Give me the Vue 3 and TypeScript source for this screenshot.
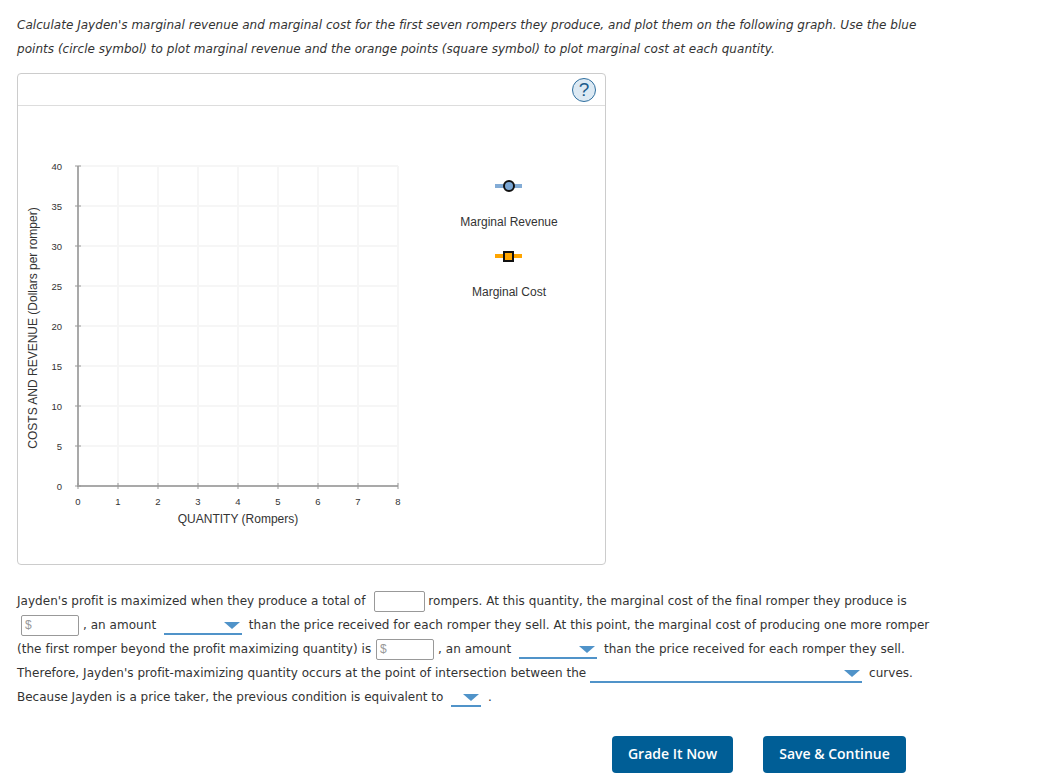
<script setup lang="ts">
const gridX = [118, 158, 198, 238, 278, 318, 358, 398]
const gridY = [166, 206, 246, 286, 326, 366, 406, 446]
const xTicks = [0, 1, 2, 3, 4, 5, 6, 7, 8]
const yTicks = [0, 5, 10, 15, 20, 25, 30, 35, 40]
</script>

<template>
  <div class="page">
    <div class="prompt">
      <div>Calculate Jayden's marginal revenue and marginal cost for the first seven rompers they produce, and plot them on the following graph. Use the blue</div>
      <div>points (circle symbol) to plot marginal revenue and the orange points (square symbol) to plot marginal cost at each quantity.</div>
    </div>

    <div class="card">
      <div class="cardHead">
        <span class="help">?</span>
      </div>
      <svg class="chart" width="587" height="458" viewBox="18 106 587 458">
        <line v-for="x in gridX" :key="'gx' + x" :x1="x" y1="166" :x2="x" y2="486" class="grid" />
        <line v-for="y in gridY" :key="'gy' + y" x1="78" :y1="y" x2="398" :y2="y" class="grid" />

        <line x1="78" y1="166" x2="78" y2="487" class="axis" />
        <line x1="77" y1="486" x2="398" y2="486" class="axis" />
        <g v-for="t in yTicks" :key="'yt' + t">
          <line x1="75" :y1="486 - t * 8" x2="81" :y2="486 - t * 8" class="tick" />
          <text x="62" :y="490 - t * 8" text-anchor="end" class="tickLabel">{{ t }}</text>
        </g>
        <g v-for="t in xTicks" :key="'xt' + t">
          <line :x1="78 + t * 40" y1="483" :x2="78 + t * 40" y2="489" class="tick" />
          <text :x="78 + t * 40" y="505" text-anchor="middle" class="tickLabel">{{ t }}</text>
        </g>

        <text x="238" y="523" text-anchor="middle" class="axisTitle">QUANTITY (Rompers)</text>
        <text transform="translate(37 328) rotate(-90)" text-anchor="middle" class="axisTitle">COSTS AND REVENUE (Dollars per romper)</text>

        <line x1="495" y1="186" x2="522" y2="186" stroke="#83acd6" stroke-width="4" />
        <circle cx="509" cy="186" r="5" fill="#7ba7d4" stroke="#111" stroke-width="2" />
        <text x="509" y="226" text-anchor="middle" class="axisTitle">Marginal Revenue</text>

        <line x1="495" y1="256" x2="522" y2="256" stroke="#ffa500" stroke-width="4" />
        <rect x="504" y="252" width="9" height="9" fill="#ffa500" stroke="#111" stroke-width="2" />
        <text x="509" y="296" text-anchor="middle" class="axisTitle">Marginal Cost</text>
      </svg>
    </div>

    <div class="answer">
      <div>Jayden's profit is maximized when they produce a total of <span class="field qty"></span>rompers. At this quantity, the marginal cost of the final romper they produce is</div>
      <div><span class="field money first">$</span>, an amount <span class="drop small"></span> than the price received for each romper they sell. At this point, the marginal cost of producing one more romper</div>
      <div>(the first romper beyond the profit maximizing quantity) is <span class="field money second">$</span>, an amount <span class="drop small"></span> than the price received for each romper they sell.</div>
      <div>Therefore, Jayden's profit-maximizing quantity occurs at the point of intersection between the <span class="drop wide"></span> curves.</div>
      <div class="tight">Because Jayden is a price taker, the previous condition is equivalent to <span class="drop tiny"></span> .</div>
    </div>

    <div class="actions">
      <button class="btn grade">Grade It Now</button>
      <button class="btn save">Save &amp; Continue</button>
    </div>
  </div>
</template>

<style>
body {
  margin: 0;
  background: #fff;
}
</style>

<style scoped>
.page {
  width: 1053px;
  height: 781px;
  overflow: hidden;
  box-sizing: border-box;
  padding: 13px 0 0 17px;
  font-family: "DejaVu Sans", Verdana, sans-serif;
  font-size: 12px;
  line-height: 24px;
  color: #333;
  white-space: nowrap;
}
.prompt {
  font-style: italic;
  letter-spacing: 0.03px;
}
.card {
  margin-top: 12px;
  width: 587px;
  height: 490px;
  border: 1px solid #ccc;
  border-radius: 4px;
}
.cardHead {
  height: 31px;
  border-bottom: 1px solid #ddd;
  position: relative;
}
.help {
  position: absolute;
  right: 9px;
  top: 4px;
  width: 24px;
  height: 24px;
  box-sizing: border-box;
  border: 1.5px solid #2f6f9f;
  border-radius: 50%;
  background: #dce9f3;
  color: #1d5c8c;
  font: 19px/21px "Liberation Sans", sans-serif;
  text-align: center;
}
.chart {
  display: block;
}
.grid {
  stroke: #f6f6f6;
  stroke-width: 2;
}
.axis {
  stroke: #a9a9a9;
  stroke-width: 2;
}
.tick {
  stroke: #999;
  stroke-width: 1;
}
.tickLabel {
  font: 9.5px "Liberation Sans", sans-serif;
  fill: #333;
}
.axisTitle {
  font: 12px "Liberation Sans", sans-serif;
  fill: #333;
}
.answer {
  margin-top: 24px;
  letter-spacing: 0.04px;
}
.tight {
  letter-spacing: 0;
}
.field {
  display: inline-block;
  box-sizing: border-box;
  height: 21px;
  vertical-align: middle;
  border: 1px solid #999;
  border-radius: 2px;
  background: #fff;
}
.qty {
  width: 51px;
  margin: 0 3px 0 5px;
}
.money {
  width: 58px;
  margin-right: 4px;
  padding-left: 3px;
  font: 12px/19px "Liberation Sans", sans-serif;
  color: #999;
}
.first {
  margin-left: 4px;
}
.second {
  margin-left: 1px;
}
.drop {
  display: inline-block;
  position: relative;
  height: 17px;
  vertical-align: middle;
  border-bottom: 2px solid #5093c9;
  margin: 0 3px 0 4px;
}
.drop::after {
  content: "";
  position: absolute;
  right: 2px;
  top: 6px;
  border-left: 8px solid transparent;
  border-right: 8px solid transparent;
  border-top: 7px solid #5093c9;
}
.small {
  width: 78px;
}
.wide {
  width: 272px;
  margin-left: 0;
}
.tiny {
  width: 30px;
  margin-left: 4px;
}
.actions {
  margin-top: 27px;
  padding-left: 595px;
  display: flex;
  gap: 30px;
}
.btn {
  height: 37px;
  border: none;
  border-radius: 4px;
  background: #005e96;
  color: #fff;
  font: 600 14px "Open Sans", sans-serif;
  padding: 0 0 2px;
}
.grade {
  width: 121px;
}
.save {
  width: 143px;
}
</style>
